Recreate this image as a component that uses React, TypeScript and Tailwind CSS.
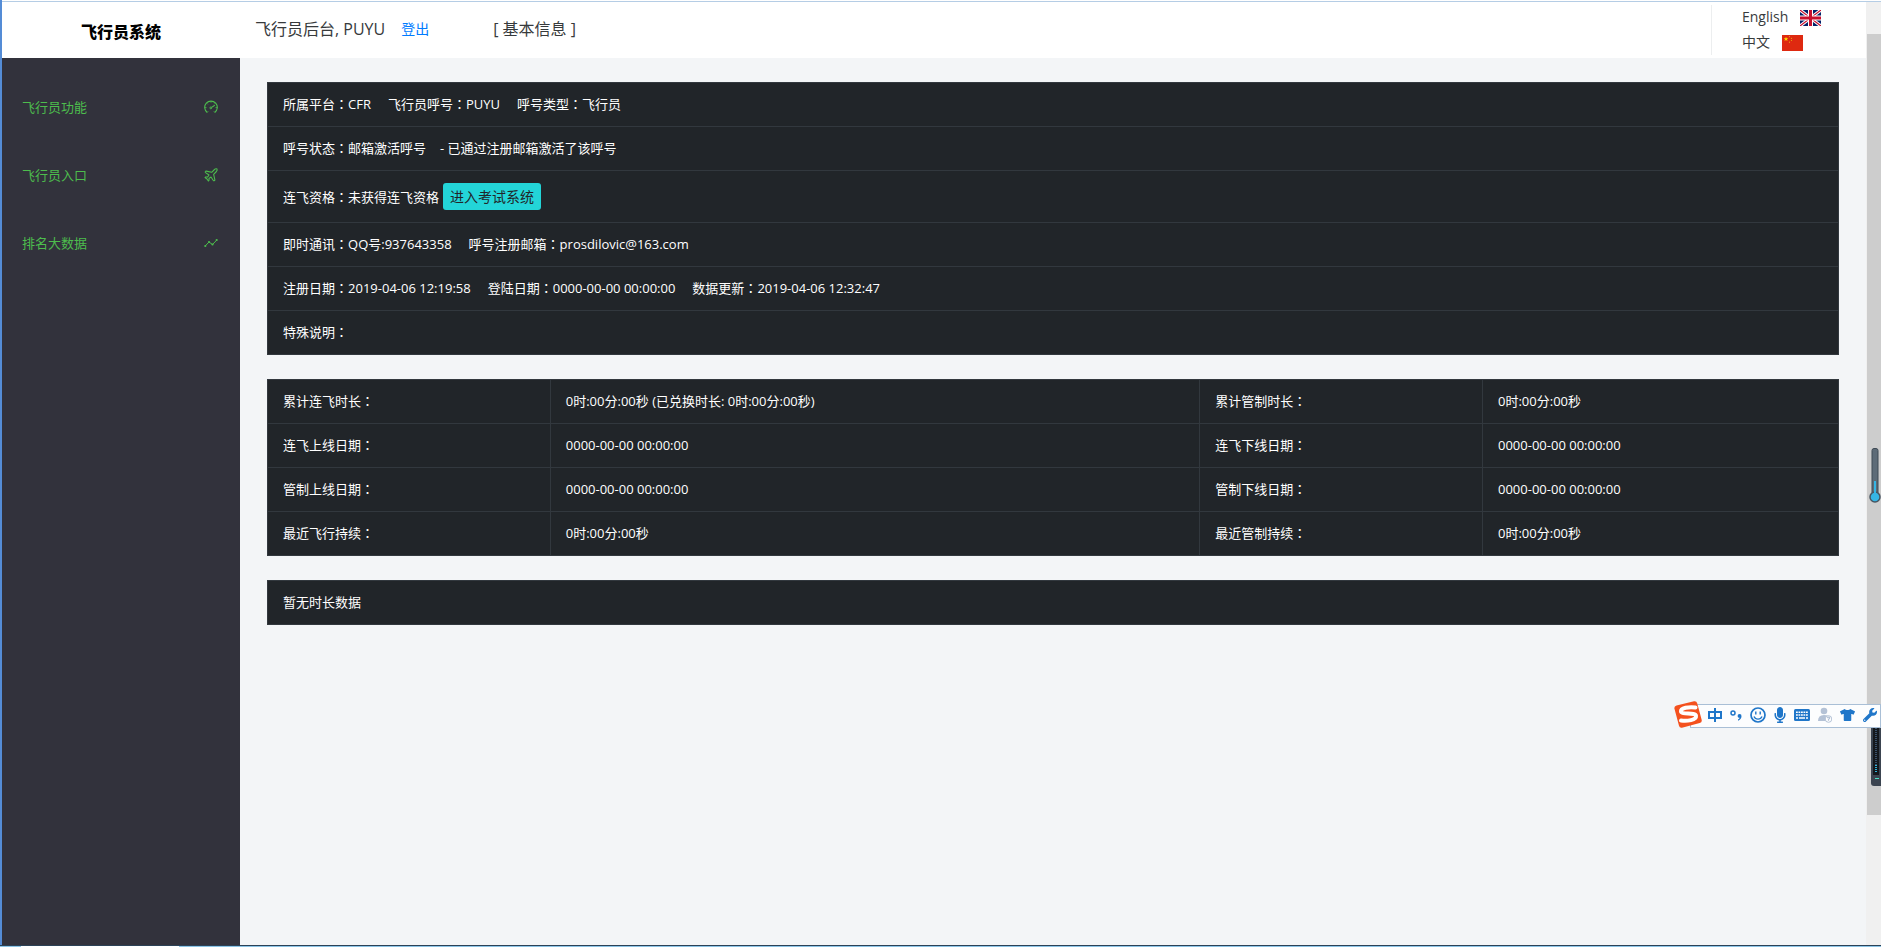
import React from 'react';
import { Plane } from 'lucide-react';
import { FaTshirt, FaWrench, FaMicrophone } from 'react-icons/fa';

const menu = [
    { label: '飞行员功能', icon: 'gauge' },
    { label: '飞行员入口', icon: 'plane' },
    { label: '排名大数据', icon: 'graph' },
];

const stats = [
    ['累计连飞时长', '0时:00分:00秒 (已兑换时长: 0时:00分:00秒)', '累计管制时长', '0时:00分:00秒'],
    ['连飞上线日期', '0000-00-00 00:00:00', '连飞下线日期', '0000-00-00 00:00:00'],
    ['管制上线日期', '0000-00-00 00:00:00', '管制下线日期', '0000-00-00 00:00:00'],
    ['最近飞行持续', '0时:00分:00秒', '最近管制持续', '0时:00分:00秒'],
];

const MenuIcon = ({ name }: { name: string }) => {
    if (name === 'plane') {
        return <Plane className="h-4 w-4" strokeWidth={1.6} />
    }
    return (
        <svg viewBox="0 0 14 14" fill="none" stroke="currentColor" className="mr-px h-[14px] w-[14px]">
            {name === 'gauge' ? (
                <>
                    <path d="M3.300 12.500A6.300 6.300 0 1 1 10.700 12.500" strokeWidth="1.100" />
                    <path d="M10.800 5.300 7.600 7.400" strokeWidth="1.100" />
                    <circle cx="6.800" cy="7.900" r=".9" />
                    <path d="M7 1.200v1.500M2.800 3.300l1 1M11.200 3.300l-.9.900M1 7.600h1.500M13 7.600h-1.500M3.300 12.400l.8-1M10.700 12.400l-.8-1" strokeWidth=".8" />
                </>
            ) : (
                <>
                    <path d="M1.200 10 5 6l3.500 2.500L12.800 4" />
                    <g fill="currentColor" stroke="none">
                        <circle cx="1.300" cy="10" r="1.100" />
                        <circle cx="5" cy="6" r="1.100" />
                        <circle cx="8.500" cy="8.500" r="1.100" />
                        <circle cx="12.700" cy="4" r="1.100" />
                    </g>
                </>
            )}
        </svg>
    )
}

const FlagUK = () => (
    <svg viewBox="0 0 21 16" className="h-4 w-[21px]">
        <path fill="#012169" d="M0 0h21v16H0z" />
        <path stroke="#fff" strokeWidth="3.200" d="M0 0l21 16M21 0L0 16" />
        <path stroke="#c8102e" strokeWidth="1.200" d="M0 0l21 16M21 0L0 16" />
        <path stroke="#fff" strokeWidth="5" d="M10.500 0v16M0 8h21" />
        <path stroke="#c8102e" strokeWidth="3" d="M10.500 0v16M0 8h21" />
    </svg>
);

const FlagCN = () => (
    <svg viewBox="0 0 21 16" className="h-4 w-[21px]">
        <path fill="#de2910" d="M0 0h21v16H0z" />
        <path fill="#ffde00" d="M4 1.800l.6 1.500h1.700L5 4.300l.5 1.700L4 5 2.500 6 3 4.300 1.700 3.300h1.700z" />
        <g fill="#e9a313">
            <circle cx="7.500" cy="1.600" r=".6" />
            <circle cx="9.500" cy="3.300" r=".6" />
            <circle cx="9.500" cy="5.500" r=".6" />
            <circle cx="7.500" cy="7.200" r=".6" />
        </g>
    </svg>
);

// floating input method bar
const InputBar = () => (
    <div className="absolute top-[701px] right-0 flex h-[27px] w-[207px] items-center text-[#1f76c9]">
        <div className="absolute top-[3px] right-0 left-4 h-6 border border-[#a9bfd6] bg-[#fcfdfe]"></div>
        <svg viewBox="0 0 28 27" className="relative h-[27px] w-7">
            <path fill="#f4511e" d="M2.500 4.500 20 .3q2.500-.5 3.200 2L27.700 19q.5 2.400-2 3L8 26.700q-2.400.5-3-2L.4 7.500q-.4-2.300 2.100-3z" />
            <path fill="none" stroke="#fff" strokeWidth="4" strokeLinecap="round" d="M21.500 6.500C15 5.500 6.500 7 7 10.500S21.500 11 22 15 13 20.500 7 19.500" />
        </svg>
        <div className="relative ml-[6px] flex flex-1 items-center justify-between pr-[4px]">
            <svg viewBox="0 0 14 14" fill="none" stroke="currentColor" strokeWidth="2" className="h-[14px] w-[14px]">
                <path d="M1 4h12v6H1zM7 0v14" />
            </svg>
            <svg viewBox="0 0 12 12" className="h-3 w-3">
                <circle cx="3" cy="4" r="2" fill="none" stroke="currentColor" strokeWidth="1.500" />
                <path fill="currentColor" d="M9.500 5a2 2 0 0 1 2 2.200C11.500 9.500 10 11 8 11.700V10.500c1-.5 1.500-1 1.500-1.700A1.900 1.900 0 0 1 9.500 5z" />
            </svg>
            <svg viewBox="0 0 16 16" fill="none" stroke="currentColor" className="h-4 w-4">
                <circle cx="8" cy="8" r="7" strokeWidth="1.700" />
                <path d="M5.800 4.500v3M10.200 4.500v3M4 9.500c1.500 3.500 6.500 3.500 8 0" strokeWidth="1.400" />
            </svg>
            <FaMicrophone className="h-4 w-3" />
            <svg viewBox="0 0 16 12" className="h-3 w-4">
                <rect width="16" height="12" rx="1.500" fill="currentColor" />
                <path stroke="#fff" strokeWidth="1.600" d="M2 3.200h12M2 6h12" strokeDasharray="1.800 .7" />
                <path stroke="#fff" strokeWidth="1.600" d="M2 9h2M5 9h6M12 9h2" />
            </svg>
            <svg viewBox="0 0 14 16" className="h-4 w-[14px] text-[#b4c2d6]">
                <circle cx="6" cy="4" r="3.300" fill="currentColor" />
                <path fill="currentColor" d="M0 14q0-6 6-6 5 0 6 3v3z" />
                <circle cx="10.500" cy="12" r="3.300" fill="#fff" stroke="currentColor" />
                <path fill="none" stroke="currentColor" strokeWidth="1.200" d="M9.200 11q1.300-1.500 2.500-.3.300 1-1.200 1.600v1.500" />
            </svg>
            <FaTshirt className="h-[14px] w-[15px]" />
            <FaWrench className="h-[14px] w-[14px]" />
        </div>
    </div>
);

const Gadgets = () => (
    <>
        <svg viewBox="0 0 12 56" className="absolute top-[448px] right-0 h-14 w-3">
            <rect x="3" y=".5" width="6" height="46" rx="2" fill="#5d6b77" stroke="#3f4a54" />
            <circle cx="6" cy="49" r="5" fill="#36b5e4" stroke="#485561" strokeWidth="1.500" />
            <path stroke="#36b5e4" strokeWidth="2" d="M6 33v13" />
        </svg>
        <svg viewBox="0 0 10 58" className="absolute top-[728px] right-0 h-[58px] w-[10px]">
            <path fill="#3b4450" d="M0 0h10v58H3q-3 0-3-3z" />
            <path fill="#14181d" d="M2 0h6v47H2z" />
            <path stroke="#39516a" strokeWidth="2" strokeDasharray="1 1" d="M5 0v37" />
            <path stroke="#2fb4dc" strokeWidth="2" strokeDasharray="1 1" d="M5 37v8" />
            <path stroke="#4be0c3" d="M4 50.500h4" />
        </svg>
    </>
);

// the TC face keeps the full-width colon centred in its box
const Field = ({ label, children }: { label: string; children?: React.ReactNode }) => (
    <span>
        {label}
        <span className="font-['Noto_Sans_CJK_TC',sans-serif]">：</span>
        {children}
    </span>
);

const cell = 'h-11 border border-[#32383e] px-[15px] pb-0.5 text-left font-normal';

const App = () => {
    return (
        <div className="relative flex min-h-screen flex-col bg-[#f3f5f7] font-['Open_Sans','Noto_Sans_CJK_SC',sans-serif] text-[13px] leading-5 text-[#373a3c]">
            <div className="flex flex-1">
                <div className="w-[2px] bg-[#548cd6]"></div>
                <div className="flex flex-1 flex-col">
                    <div className="h-[2px] border-b border-[#b5cde5] bg-white"></div>
                    <div className="flex flex-1">
                        <div className="flex flex-1 flex-col">
                            <header className="flex h-14 items-center bg-white">
                                <div className="w-[238px] pt-1 text-center text-base font-black text-black">飞行员系统</div>
                                <div className="flex flex-1 items-center pb-0.5 pl-[15px] text-base">
                                    <span>飞行员后台, PUYU</span>
                                    <a href="#" className="ml-4 text-sm text-[#007bff]">登出</a>
                                    <span className="ml-16">[ 基本信息 ]</span>
                                </div>
                                <div className="flex h-[50px] w-[155px] flex-col border-l border-[#eceeef] pl-[30px] text-sm">
                                    <a href="#" className="flex h-[25px] items-center gap-3">
                                        <span className="pb-0.5">English</span>
                                        <FlagUK />
                                    </a>
                                    <a href="#" className="flex h-[25px] items-center gap-3">
                                        <span className="pb-0.5">中文</span>
                                        <FlagCN />
                                    </a>
                                </div>
                            </header>
                            <div className="flex flex-1">
                                <nav className="w-[238px] bg-[#32323c] pt-4 text-[#4dbd4d]">
                                    {menu.map((item) => (
                                        <a key={item.label} href="#" className="flex h-17 items-center justify-between pr-[21px] pb-0.5 pl-5">
                                            {item.label}
                                            <MenuIcon name={item.icon} />
                                        </a>
                                    ))}
                                </nav>
                                <main className="flex flex-1 flex-col gap-6 px-[27px] pt-6 text-white">
                                    <table className="w-full border-collapse bg-[#212529]">
                                        <tbody>
                                            <tr>
                                                <td className={cell}>
                                                    <div className="flex gap-[17px]">
                                                        <Field label="所属平台">CFR</Field>
                                                        <Field label="飞行员呼号">PUYU</Field>
                                                        <Field label="呼号类型">飞行员</Field>
                                                    </div>
                                                </td>
                                            </tr>
                                            <tr>
                                                <td className={cell}>
                                                    <div className="flex gap-[14px]">
                                                        <Field label="呼号状态">邮箱激活呼号</Field>
                                                        <span>- 已通过注册邮箱激活了该呼号</span>
                                                    </div>
                                                </td>
                                            </tr>
                                            <tr>
                                                <td className="h-[52px] border border-[#32383e] px-[15px]">
                                                    <div className="flex items-center gap-1">
                                                        <Field label="连飞资格">未获得连飞资格</Field>
                                                        <button className="h-[27px] rounded-[3px] bg-[#23d5d8] px-[7px] text-sm text-[#212529]">进入考试系统</button>
                                                    </div>
                                                </td>
                                            </tr>
                                            <tr>
                                                <td className={cell}>
                                                    <div className="flex gap-[17px]">
                                                        <Field label="即时通讯">QQ号:937643358</Field>
                                                        <Field label="呼号注册邮箱">prosdilovic@163.com</Field>
                                                    </div>
                                                </td>
                                            </tr>
                                            <tr>
                                                <td className={cell}>
                                                    <div className="flex gap-[17px]">
                                                        <Field label="注册日期">2019-04-06 12:19:58</Field>
                                                        <Field label="登陆日期">0000-00-00 00:00:00</Field>
                                                        <Field label="数据更新">2019-04-06 12:32:47</Field>
                                                    </div>
                                                </td>
                                            </tr>
                                            <tr>
                                                <td className={cell}><Field label="特殊说明" /></td>
                                            </tr>
                                        </tbody>
                                    </table>

                                    <table className="w-full table-fixed border-collapse bg-[#212529]">
                                        <colgroup>
                                            <col className="w-[18%]" />
                                            <col />
                                            <col className="w-[18%]" />
                                            <col className="w-[356px]" />
                                        </colgroup>
                                        <tbody>
                                            {stats.map((row) => (
                                                <tr key={row[0]}>
                                                    <th scope="row" className={cell}><Field label={row[0]} /></th>
                                                    <td className={cell}>{row[1]}</td>
                                                    <th scope="row" className={cell}><Field label={row[2]} /></th>
                                                    <td className={cell}>{row[3]}</td>
                                                </tr>
                                            ))}
                                        </tbody>
                                    </table>

                                    <table className="w-full border-collapse bg-[#212529]">
                                        <tbody>
                                            <tr>
                                                <td className={cell}>暂无时长数据</td>
                                            </tr>
                                        </tbody>
                                    </table>
                                </main>
                            </div>
                        </div>
                        <div className="w-[15px] bg-[#f0f0f0] pt-8 pl-px">
                            <div className="h-[781px] bg-[#cdcdcd]"></div>
                        </div>
                    </div>
                </div>
            </div>
            <div className="flex h-[2px] border-t border-[#2c4257] bg-[#8cc4e6]">
                <div className="ml-[21px] w-[158px] bg-white"></div>
            </div>
            <Gadgets />
            <InputBar />
        </div>
    )
}
export default App;
